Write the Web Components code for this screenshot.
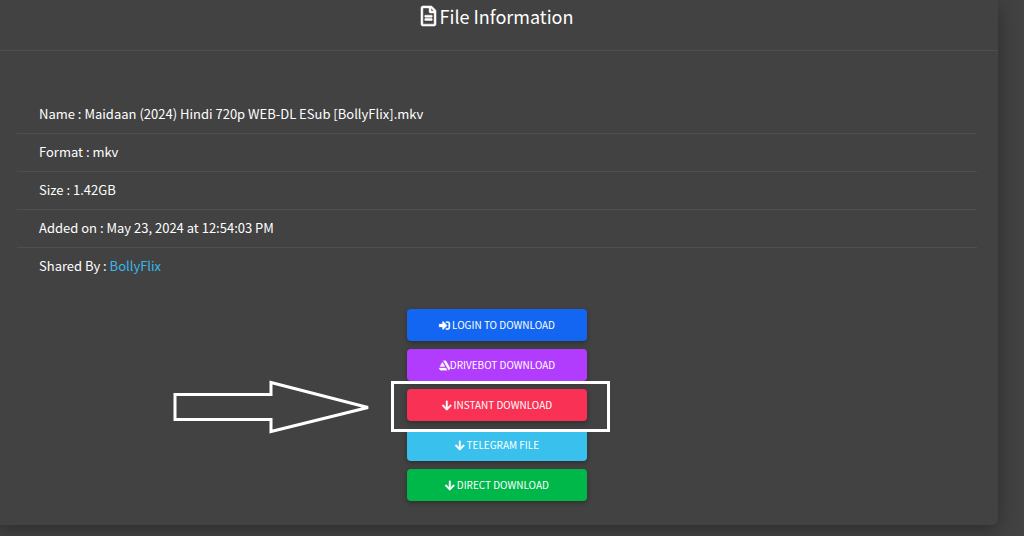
<!DOCTYPE html>
<html lang="en">
<head>
<meta charset="utf-8">
<meta name="viewport" content="width=device-width, initial-scale=1">
<title>File Information</title>
<style>
body { margin: 0; background: #424242; color: #fff; font-family: "Noto Sans CJK SC", "Noto Sans", sans-serif; overflow-x: hidden; }
</style>
</head>
<body>
<file-page></file-page>
<script>
const ICONS = {
  file: ['0 0 384 512', 'M288 248v28c0 6.6-5.4 12-12 12H108c-6.6 0-12-5.4-12-12v-28c0-6.6 5.4-12 12-12h168c6.6 0 12 5.4 12 12zm-12 72H108c-6.6 0-12 5.4-12 12v28c0 6.6 5.4 12 12 12h168c6.6 0 12-5.4 12-12v-28c0-6.6-5.4-12-12-12zm108-188.1V464c0 26.5-21.5 48-48 48H48c-26.5 0-48-21.5-48-48V48C0 21.5 21.5 0 48 0h204.1C264.8 0 277 5.1 286 14.1L369.9 98c9 8.9 14.1 21.2 14.1 33.9zm-128-80V128h76.1L256 51.9zM336 464V176H232c-13.3 0-24-10.7-24-24V48H48v416h288z'],
  login: ['0 0 512 512', 'M416 448h-84c-6.6 0-12-5.4-12-12v-40c0-6.6 5.4-12 12-12h84c17.7 0 32-14.3 32-32V160c0-17.7-14.3-32-32-32h-84c-6.6 0-12-5.4-12-12V76c0-6.6 5.4-12 12-12h84c53 0 96 43 96 96v192c0 53-43 96-96 96zm-47-209L201 71c-15-15-41-4.5-41 17v96H24c-13.3 0-24 10.7-24 24v96c0 13.3 10.7 24 24 24h136v96c0 21.5 26 32 41 17l168-168c9.3-9.4 9.3-24.6 0-34z'],
  drive: ['0 0 512 512', 'M2 377.4l43 74.3A51.35 51.35 0 0 0 90.9 480h285.4l-59.2-102.6zM501.8 350L335.6 59.3A51.38 51.38 0 0 0 290.2 32h-88.4l257.3 447.6 40.7-70.5c1.9-3.2 21-29.7 2-59.1zM275 304.5l-115.5-200L44 304.5z'],
  down: ['0 0 448 512', 'M413.1 222.5l22.2 22.2c9.4 9.4 9.4 24.6 0 33.9L241 473c-9.4 9.4-24.6 9.4-33.9 0L12.7 278.6c-9.4-9.4-9.4-24.6 0-33.9l22.2-22.2c9.5-9.5 25-9.3 34.3.4L184 343.4V56c0-13.3 10.7-24 24-24h32c13.3 0 24 10.7 24 24v287.4l114.8-120.5c9.3-9.8 24.8-10 34.3-.4z']
};
function define(name, render) {
  customElements.define(name, class extends HTMLElement {
    constructor() { super(); this.attachShadow({ mode: 'open' }); }
    connectedCallback() { this.shadowRoot.innerHTML = render(this); }
  });
}

define('app-icon', el => {
  const [box, path] = ICONS[el.getAttribute('name')];
  return `<style>:host{display:block;flex:none} svg{display:block;overflow:visible;height:var(--icon-size,11px);fill:currentColor;stroke:currentColor;stroke-width:14}</style>
  <svg viewBox="${box}" aria-hidden="true"><path d="${path}"/></svg>`;
});

define('info-row', () => `<style>
  :host{display:block;padding:0 22px 2px;font-size:13px;line-height:35px;border-bottom:1px solid #4f4f4f}
  :host(:last-of-type){border-bottom-color:transparent}
  ::slotted(a){color:#39b8e8;text-decoration:none}
</style><slot></slot>`);

define('download-button', el => `<style>
  :host{display:block}
  button{display:flex;align-items:center;justify-content:center;gap:var(--gap,2px);width:100%;height:32px;margin:0;padding:0;border:0;border-radius:4px;
    background:var(--fill);color:#fff;font:400 10px/16px "Noto Sans CJK SC","Noto Sans",sans-serif;text-transform:uppercase;cursor:pointer;box-shadow:0 2px 5px rgba(0,0,0,.3)}
</style><button type="button"><app-icon name="${el.getAttribute('icon')}"></app-icon><span><slot></slot></span></button>`);

define('call-out', () => `<style>
  :host{display:block;position:relative;z-index:1}
  .frame{position:absolute;inset:-8px -23px -11px -16px;border:3px solid #fff;pointer-events:none}
  svg{position:absolute;right:217px;top:-9px;width:198px;height:54px;fill:none;stroke:#fff;stroke-width:3;pointer-events:none}
</style><slot></slot><div class="frame"></div>
<svg viewBox="0 0 198 54" aria-hidden="true"><path d="M3 14.5H99V2.5L196 27.5L99 51.5V39.5H3Z"/></svg>`);

define('file-card', () => `<style>
  :host{display:block;margin:0 26px 11px -4px;border-radius:0 0 6px 6px;background:#424242;box-shadow:0 4px 20px rgba(0,0,0,.35)}
  header{display:flex;justify-content:center;align-items:center;height:51px;box-sizing:border-box;padding-bottom:18px;border-bottom:1px solid #4f4f4f}
  main{padding:45px 21px 24px}
</style><header><slot name="title"></slot></header><main><slot></slot></main>`);

define('file-page', () => `<style>
  :host{display:block}
  h1{display:flex;align-items:center;gap:4px;margin:0;font-size:18px;font-weight:400;line-height:28px;--icon-size:20px}
  .actions{display:grid;gap:8px;width:180px;margin:23px auto 0}
</style>
<file-card>
  <h1 slot="title"><app-icon name="file"></app-icon><span>File Information</span></h1>
  <info-row>Name : Maidaan (2024) Hindi 720p WEB-DL ESub [BollyFlix].mkv</info-row>
  <info-row>Format : mkv</info-row>
  <info-row>Size : 1.42GB</info-row>
  <info-row>Added on : May 23, 2024 at 12:54:03 PM</info-row>
  <info-row>Shared By : <a href="#">BollyFlix</a></info-row>
  <div class="actions">
    <download-button icon="login" style="--fill:#1266f1">Login to download</download-button>
    <download-button icon="drive" style="--fill:#b23cfd;--gap:0px">Drivebot download</download-button>
    <call-out><download-button icon="down" style="--fill:#f93154">Instant download</download-button></call-out>
    <download-button icon="down" style="--fill:#39c0ed">Telegram file</download-button>
    <download-button icon="down" style="--fill:#00b74a">Direct download</download-button>
  </div>
</file-card>`);
</script>
</body>
</html>
